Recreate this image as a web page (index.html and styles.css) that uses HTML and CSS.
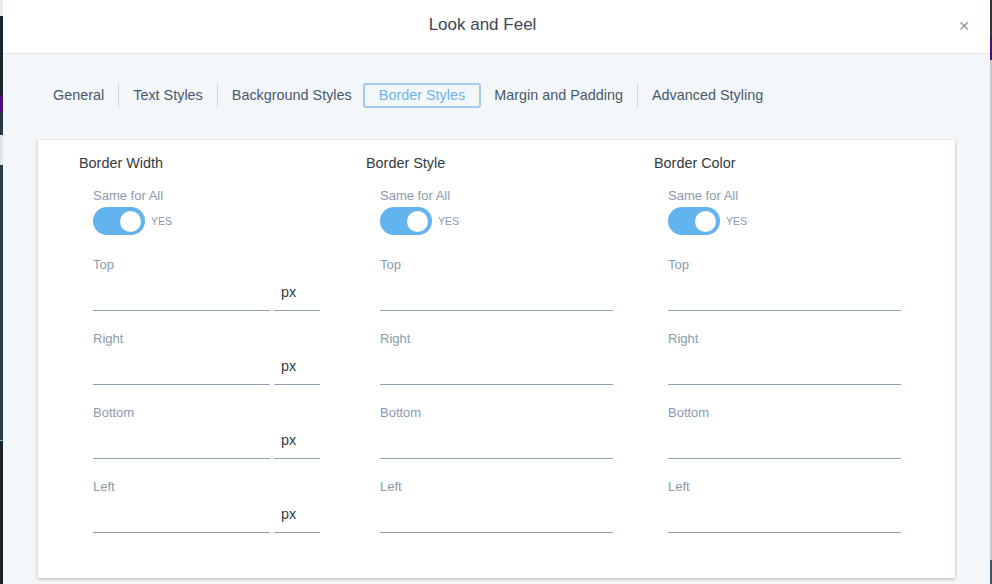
FILE: index.html
```html
<!DOCTYPE html>
<html>
<head>
<meta charset="utf-8">
<link rel="stylesheet" href="styles.css">
</head>
<body>
<div class="strip strip-left"></div>
<div class="modal">
  <div class="modal-header">
    <div class="title">Look and Feel</div>
    <div class="close">&#x2715;</div>
  </div>
  <div class="modal-body">
    <div class="tabs">
      <div class="tab first">General</div>
      <div class="tab">Text Styles</div>
      <div class="tab">Background Styles</div>
      <div class="tab active">Border Styles</div>
      <div class="tab no-sep">Margin and Padding</div>
      <div class="tab">Advanced Styling</div>
    </div>
    <div class="card">
      <div class="col">
        <div class="col-title">Border Width</div>
        <div class="col-inner">
          <div class="label">Same for All</div>
          <div class="switch-row"><div class="switch"><div class="knob"></div></div><span class="yes">YES</span></div>
          <div class="label field-label">Top</div>
          <div class="field-row"><div class="field grow"></div><div class="field unit">px</div></div>
          <div class="label field-label">Right</div>
          <div class="field-row"><div class="field grow"></div><div class="field unit">px</div></div>
          <div class="label field-label">Bottom</div>
          <div class="field-row"><div class="field grow"></div><div class="field unit">px</div></div>
          <div class="label field-label">Left</div>
          <div class="field-row"><div class="field grow"></div><div class="field unit">px</div></div>
        </div>
      </div>
      <div class="col">
        <div class="col-title">Border Style</div>
        <div class="col-inner">
          <div class="label">Same for All</div>
          <div class="switch-row"><div class="switch"><div class="knob"></div></div><span class="yes">YES</span></div>
          <div class="label field-label">Top</div>
          <div class="field-row"><div class="field grow"></div></div>
          <div class="label field-label">Right</div>
          <div class="field-row"><div class="field grow"></div></div>
          <div class="label field-label">Bottom</div>
          <div class="field-row"><div class="field grow"></div></div>
          <div class="label field-label">Left</div>
          <div class="field-row"><div class="field grow"></div></div>
        </div>
      </div>
      <div class="col">
        <div class="col-title">Border Color</div>
        <div class="col-inner">
          <div class="label">Same for All</div>
          <div class="switch-row"><div class="switch"><div class="knob"></div></div><span class="yes">YES</span></div>
          <div class="label field-label">Top</div>
          <div class="field-row"><div class="field grow"></div></div>
          <div class="label field-label">Right</div>
          <div class="field-row"><div class="field grow"></div></div>
          <div class="label field-label">Bottom</div>
          <div class="field-row"><div class="field grow"></div></div>
          <div class="label field-label">Left</div>
          <div class="field-row"><div class="field grow"></div></div>
        </div>
      </div>
    </div>
  </div>
</div>
<div class="strip strip-right"></div>
</body>
</html>
```
FILE: styles.css
```css
html, body {
  margin: 0;
  padding: 0;
}
body {
  width: 992px;
  height: 584px;
  overflow: hidden;
  display: flex;
  background: #1c2b34;
  font-family: "Liberation Sans", Arial, sans-serif;
}
.strip {
  flex: none;
  height: 584px;
}
.strip-left {
  width: 3px;
  background: linear-gradient(to bottom,
    #e8ecef 0, #e8ecef 16px,
    #17262e 16px, #17262e 95px,
    #4b0f7a 95px, #4b0f7a 112px,
    #263845 112px, #263845 135px,
    #dfe7ee 135px, #dfe7ee 165px,
    #2a3d4a 165px, #2a3d4a 440px,
    #6aa8d8 440px, #6aa8d8 441px,
    #152228 441px, #152228 584px);
}
.strip-right {
  width: 2px;
  background: linear-gradient(to bottom,
    #2a3640 0, #2a3640 38px,
    #4b0f7a 38px, #4b0f7a 60px,
    #c4cbd1 60px, #c4cbd1 560px,
    #3d5566 560px, #3d5566 584px);
}
.modal {
  flex: 1;
  display: flex;
  flex-direction: column;
  background: #f4f7f9;
}
.modal-header {
  height: 53px;
  flex: none;
  background: #ffffff;
  border-bottom: 1px solid #e4e8eb;
  display: flex;
  align-items: center;
  justify-content: center;
  padding-right: 28px;
  position: relative;
}
.title {
  font-size: 17px;
  color: #3c4852;
  margin-top: -3px;
}
.close {
  position: absolute;
  right: 20px;
  top: 18px;
  font-size: 14px;
  font-weight: bold;
  color: #8e9aab;
  font-family: "DejaVu Sans", sans-serif;
}
.modal-body {
  flex: 1;
  padding: 29px 35px 0 35px;
}
.tabs {
  display: flex;
  height: 25px;
  padding-left: 15px;
}
.tab {
  font-size: 14.4px;
  color: #4a5869;
  line-height: 25px;
  padding: 0 14px;
  border-left: 1px solid #d4d9de;
  box-sizing: border-box;
  height: 25px;
}
.tab.first {
  border-left: none;
  padding-left: 0;
}
.tab.no-sep {
  border-left: none;
  padding-left: 13px;
}
.tab.active {
  color: #6cb6ec;
  border: 2px solid #a4c9f2;
  border-radius: 3px;
  line-height: 21px;
  padding: 0 14px;
  margin-left: -3px;
}
.card {
  margin-top: 32px;
  background: #ffffff;
  height: 438px;
  box-sizing: border-box;
  box-shadow: 0 1px 3px rgba(0, 0, 0, 0.28);
  padding: 13px 0 0 41px;
  display: grid;
  grid-template-columns: 287px 288px 287px;
  align-content: start;
}
.col-title {
  font-size: 14.4px;
  line-height: 20px;
  color: #333b42;
}
.col-inner {
  margin-top: 15px;
  padding-left: 14px;
  width: 233px;
}
.label {
  font-size: 13px;
  line-height: 16px;
  color: #8a9aad;
}
.switch-row {
  display: flex;
  align-items: center;
  margin-top: 3px;
  height: 28px;
}
.switch {
  width: 52px;
  height: 28px;
  border-radius: 14px;
  background: #63b3ee;
  display: flex;
  align-items: center;
  justify-content: flex-end;
  padding-right: 4px;
  box-sizing: border-box;
}
.knob {
  width: 21px;
  height: 21px;
  border-radius: 50%;
  background: #ffffff;
}
.yes {
  font-size: 10.5px;
  color: #8a9aad;
  margin-left: 6px;
}
.field-label {
  margin-top: 22px;
}
.field-label ~ .field-label {
  margin-top: 20px;
}
.field-row {
  display: flex;
  gap: 4px;
  height: 38px;
}
.field {
  border-bottom: 1px solid #8ea2b3;
  box-sizing: border-box;
  height: 38px;
}
.grow {
  flex: 1;
}
.unit {
  width: 46px;
  flex: none;
  font-size: 14.4px;
  color: #333b42;
  line-height: 39px;
  padding-left: 7px;
}
.col:first-child .col-inner {
  width: 227px;
}
```
